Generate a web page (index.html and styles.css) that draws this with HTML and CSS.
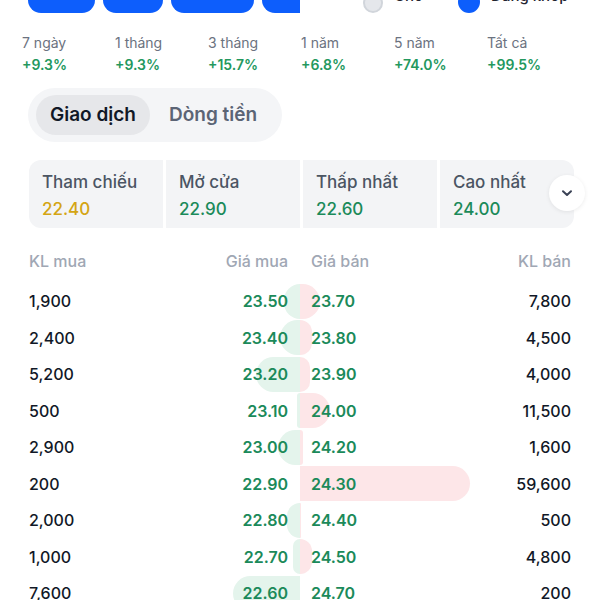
FILE: index.html
```html
<!DOCTYPE html>
<html lang="vi">
<head>
  <meta charset="UTF-8" />
  <meta name="viewport" content="width=device-width, initial-scale=1.0"/>
  <title>Sổ lệnh</title>
  <link rel="stylesheet" href="styles.css">
</head>
<body>

  <div class="topbar">
    <div class="chips">
      <span class="chip c1">Giá</span>
      <span class="chip c2">KL</span>
      <span class="chip c3">Mua bán</span>
      <span class="chip c4">Khác</span>
    </div>
    <div class="radios">
      <span class="radio"><i class="dot"></i>Chờ</span>
      <span class="radio on"><i class="dot"></i>Đang khớp</span>
    </div>
  </div>

  <div class="periods">
    <div class="period"><span class="p-label">7 ngày</span><span class="p-val">+9.3%</span></div>
    <div class="period"><span class="p-label">1 tháng</span><span class="p-val">+9.3%</span></div>
    <div class="period"><span class="p-label">3 tháng</span><span class="p-val">+15.7%</span></div>
    <div class="period"><span class="p-label">1 năm</span><span class="p-val">+6.8%</span></div>
    <div class="period"><span class="p-label">5 năm</span><span class="p-val">+74.0%</span></div>
    <div class="period"><span class="p-label">Tất cả</span><span class="p-val">+99.5%</span></div>
  </div>

  <div class="tabs">
    <span class="tab active">Giao dịch</span>
    <span class="tab">Dòng tiền</span>
  </div>

  <div class="cards-wrap">
    <div class="cards">
      <div class="card"><span class="c-label">Tham chiếu</span><span class="c-val ref">22.40</span></div>
      <div class="card"><span class="c-label">Mở cửa</span><span class="c-val">22.90</span></div>
      <div class="card"><span class="c-label">Thấp nhất</span><span class="c-val">22.60</span></div>
      <div class="card"><span class="c-label">Cao nhất</span><span class="c-val">24.00</span></div>
    </div>
    <button class="more" aria-label="Xem thêm">
      <svg width="14" height="14" viewBox="0 0 14 14"><path d="M3 5.2 L7 9 L11 5.2" fill="none" stroke="#3b4256" stroke-width="2" stroke-linecap="round" stroke-linejoin="round"/></svg>
    </button>
  </div>

  <div class="book">
    <div class="row head">
      <div class="side buy"><span>KL mua</span><span>Giá mua</span></div>
      <div class="side sell"><span>Giá bán</span><span>KL bán</span></div>
    </div>
    <div id="rows"></div>
  </div>

  <script>
  // buy vol, buy price, sell price, sell vol, bar widths (px)
  const book = [
    ["1,900", "23.50", "23.70", "7,800", 16, 20],
    ["2,400", "23.40", "23.80", "4,500", 20, 12],
    ["5,200", "23.20", "23.90", "4,000", 44, 10],
    ["500", "23.10", "24.00", "11,500", 3, 30],
    ["2,900", "23.00", "24.20", "1,600", 22, 3],
    ["200", "22.90", "24.30", "59,600", 0, 170],
    ["2,000", "22.80", "24.40", "500", 13, 1],
    ["1,000", "22.70", "24.50", "4,800", 7, 12],
    ["7,600", "22.60", "24.70", "200", 67, 0]
  ];

  let html = "";
  book.forEach(r => {
    html += `<div class="row">
      <div class="side buy"><i class="bar" style="width:${r[4]}px"></i><span class="vol">${r[0]}</span><span class="price">${r[1]}</span></div>
      <div class="side sell"><i class="bar" style="width:${r[5]}px"></i><span class="price">${r[2]}</span><span class="vol">${r[3]}</span></div>
    </div>`;
  });
  document.getElementById("rows").innerHTML = html;
  </script>

</body>
</html>
```

FILE: styles.css
```css
body { margin: 0; font-family: Inter, "Noto Sans", sans-serif; background: #fff; color: #111827; overflow: hidden; }

.topbar { display: flex; align-items: flex-end; margin-top: -23px; padding: 0 0 0 28px; height: 36px; }
.chips { display: flex; gap: 8px; width: 272px; overflow: hidden; flex-shrink: 0; }
.chip {
  background: #0d5efc; color: #fff; height: 36px; border-radius: 13px;
  display: flex; align-items: center; justify-content: center;
  font-size: 15px; font-weight: 600; flex-shrink: 0; padding-bottom: 16px; box-sizing: border-box;
}
.c1 { width: 67px; }
.c2 { width: 60px; }
.c3 { width: 83px; }
.c4 { width: 70px; }
.radios { display: flex; gap: 35px; margin-left: 63px; }
.radio { display: flex; align-items: center; gap: 11px; font-size: 15px; font-weight: 500; color: #1f2430; height: 20px; position: relative; top: -8px; }
.radio .dot { flex-shrink: 0; width: 20px; height: 20px; border-radius: 50%; background: #e5e7eb; box-sizing: border-box; border: 2px solid #d1d5db; position: relative; top: 8px; }
.radio.on .dot { background: #0d5efc; border-color: #0d5efc; width: 22px; height: 22px; top: 7px; }

.periods { display: grid; grid-template-columns: repeat(6, 93px); padding-left: 22px; margin-top: 20px; }
.period { display: flex; flex-direction: column; gap: 2px; font-size: 14px; line-height: 20px; }
.p-label { color: #6b7280; }
.p-val { color: #23985e; font-weight: 600; }

.tabs {
  display: inline-flex; gap: 5px; margin: 13px 0 0 28px; padding: 7px 11px 7px 8px;
  background: #f4f5f7; border-radius: 27px;
}
.tab { padding: 0 14px; height: 40px; line-height: 40px; font-size: 19px; font-weight: 600; color: #5b6475; border-radius: 20px; }
.tab.active { background: #e6e7ea; color: #111827; }

.cards-wrap { position: relative; margin: 18px 0 0 29px; }
.cards { display: flex; gap: 3px; width: 545px; border-radius: 12px; overflow: hidden; }
.card {
  width: 134px; flex-shrink: 0; background: #f3f4f6; padding: 11px 13px 8px; box-sizing: border-box;
  display: flex; flex-direction: column; gap: 5px; font-size: 17px; line-height: 22px; font-weight: 500;
}
.c-label { color: #4b5563; }
.c-val { color: #1b8a5a; }
.c-val.ref { color: #d4a514; }
.more {
  position: absolute; left: 520px; top: 15px; width: 36px; height: 36px; border-radius: 50%;
  border: none; background: #fff; box-shadow: 0 1px 4px rgba(0,0,0,0.08);
  display: flex; align-items: center; justify-content: center; padding: 0;
}

.book { margin-top: 22px; }
.row { display: grid; grid-template-columns: 1fr 1fr; padding: 0 29px; height: 36.5px; align-items: center; font-size: 16px; }
.row.head { height: 22px; margin-bottom: 11px; color: #a0a7b4; font-weight: 500; }
.side { position: relative; display: flex; justify-content: space-between; align-items: center; height: 100%; }
.side.buy { padding-right: 12px; }
.side.sell { padding-left: 11px; }
.side span { position: relative; }
.bar { position: absolute; top: 0.75px; height: 35px; }
.buy .bar { right: 0; background: #e4f4ec; border-radius: 18px 0 0 18px; }
.sell .bar { left: 0; background: #fde6e8; border-radius: 0 18px 18px 0; }
.vol { font-weight: 500; color: #111827; }
.price { font-weight: 600; color: #1b8a5a; }
```
